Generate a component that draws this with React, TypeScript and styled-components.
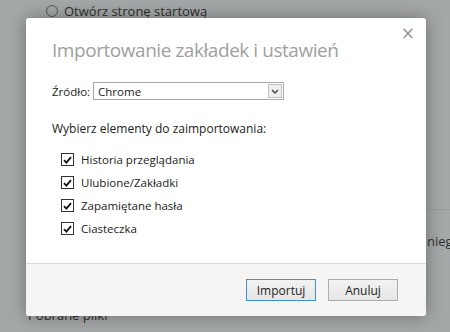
import React from "react";
import styled, { createGlobalStyle } from "styled-components";

const Global = createGlobalStyle`
  html, body { margin: 0; padding: 0; }
  body { background: #a5a8a9; font-family: "Open Sans", "Noto Sans", sans-serif; }
`;

const Stage = styled.div`
  position: relative;
  width: 450px;
  height: 332px;
  overflow: hidden;
  background: #a5a8a9;
`;

const BgPage = styled.div`
  display: flex;
  flex-direction: column;
  height: 100%;
  color: #2e3030;
  font-size: 13px;
`;

const RadioRow = styled.div`
  display: flex;
  align-items: center;
  gap: 6px;
  padding: 2px 0 0 46px;
  height: 17px;
`;

const Radio = styled.span`
  width: 12px;
  height: 12px;
  border: 1px solid #555;
  border-radius: 50%;
  box-sizing: border-box;
`;

const BgRule = styled.div`
  margin: 190px 0 0 400px;
  height: 1px;
  background: #999c9d;
`;

const BgSide = styled.div`
  padding: 22px 0 0 427px;
  white-space: nowrap;
`;

const BgBottom = styled.div`
  margin-top: auto;
  padding: 0 0 8px 28px;
`;

const Dialog = styled.div`
  position: absolute;
  left: 26px;
  top: 18px;
  width: 400px;
  height: 298px;
  background: #fff;
  border-radius: 3px;
  box-shadow: 0 0 18px rgba(0, 0, 0, 0.35);
  display: flex;
  flex-direction: column;
  color: #222;
  font-size: 11.5px;
`;

const Close = styled.div`
  position: absolute;
  right: 11px;
  top: 5px;
  color: #9a9a9a;
  font-size: 17px;
  font-family: "DejaVu Sans", sans-serif;
`;

const Body = styled.div`
  flex: 1;
  padding: 18px 26px 0;
  display: flex;
  flex-direction: column;
`;

const Title = styled.h1`
  margin: 0;
  font-weight: 400;
  font-size: 19px;
  color: #a0a0a0;
  letter-spacing: -0.45px;
  line-height: 28px;
`;

const SourceRow = styled.div`
  display: flex;
  align-items: center;
  gap: 3px;
  margin-top: 18px;
`;

const Select = styled.div`
  width: 191px;
  height: 18px;
  border: 1px solid #a9a9a9;
  box-sizing: border-box;
  display: flex;
  align-items: center;
  justify-content: space-between;
  padding: 0 1px 0 4px;
`;

const Arrow = styled.div`
  width: 14px;
  height: 14px;
  border: 1px solid #c4c4c4;
  box-sizing: border-box;
  background: #f0f0f0;
  display: flex;
  align-items: center;
  justify-content: center;
`;

const Heading = styled.div`
  margin-top: 20px;
  font-size: 12px;
`;

const List = styled.div`
  display: flex;
  flex-direction: column;
  gap: 6px;
  margin-top: 14px;
  padding-left: 9px;
`;

const Item = styled.label`
  display: flex;
  align-items: center;
  gap: 7px;
  height: 17px;
`;

const Box = styled.span`
  width: 13px;
  height: 13px;
  border: 1px solid #333;
  box-sizing: border-box;
  display: flex;
  align-items: center;
  justify-content: center;
  background: #fff;
`;

const Footer = styled.div`
  height: 53px;
  border-top: 1px solid #dcdcdc;
  background: #f5f5f5;
  border-radius: 0 0 3px 3px;
  box-sizing: border-box;
  display: flex;
  justify-content: flex-end;
  align-items: flex-start;
  gap: 12px;
  padding: 15px 28px 0 0;
`;

const Button = styled.button<{ $primary?: boolean }>`
  width: 70px;
  height: 22px;
  font-family: inherit;
  font-size: 12px;
  color: #222;
  border: 1px solid ${(p) => (p.$primary ? "#3c92d6" : "#adadad")};
  background: linear-gradient(#f2f2f2, #e6e6e6);
  padding: 0;
`;

const Check = () => (
  <svg width="9" height="8" viewBox="0 0 9 8">
    <path d="M1 4.2 L3.4 6.6 L8 1.2" fill="none" stroke="#111" strokeWidth="1.8" />
  </svg>
);

const items = ["Historia przeglądania", "Ulubione/Zakładki", "Zapamiętane hasła", "Ciasteczka"];

export default function App() {
  return (
    <Stage>
      <Global />
      <BgPage>
        <RadioRow>
          <Radio />
          <span>Otwórz stronę startową</span>
        </RadioRow>
        <BgRule />
        <BgSide>nieg</BgSide>
        <BgBottom>Pobrane pliki</BgBottom>
      </BgPage>
      <Dialog>
        <Close>×</Close>
        <Body>
          <Title>Importowanie zakładek i ustawień</Title>
          <SourceRow>
            <span>Źródło:</span>
            <Select>
              <span>Chrome</span>
              <Arrow>
                <svg width="8" height="5" viewBox="0 0 8 5">
                  <path d="M1 1 L4 4 L7 1" fill="none" stroke="#444" strokeWidth="1.4" />
                </svg>
              </Arrow>
            </Select>
          </SourceRow>
          <Heading>Wybierz elementy do zaimportowania:</Heading>
          <List>
            {items.map((t) => (
              <Item key={t}>
                <Box>
                  <Check />
                </Box>
                <span>{t}</span>
              </Item>
            ))}
          </List>
        </Body>
        <Footer>
          <Button $primary>Importuj</Button>
          <Button>Anuluj</Button>
        </Footer>
      </Dialog>
    </Stage>
  );
}
